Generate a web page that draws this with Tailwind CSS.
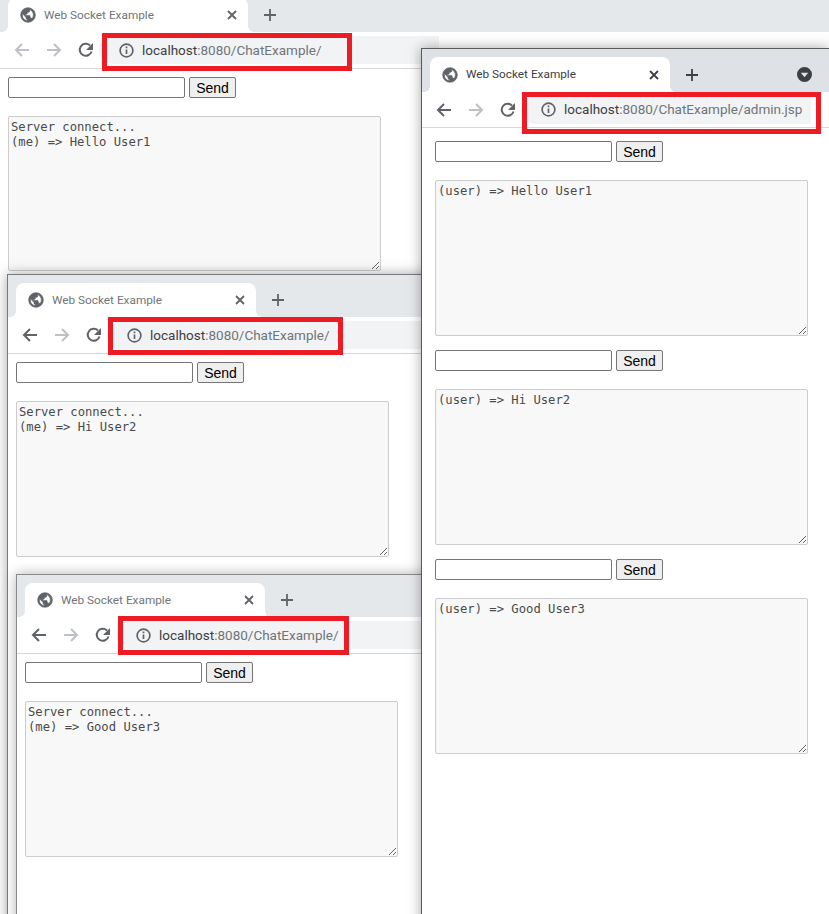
<!DOCTYPE html>
<html>
<head>
    <title>Web Socket Example</title>
    <script src="https://cdn.jsdelivr.net/npm/@tailwindcss/browser@4"></script>
</head>
<body class="bg-white overflow-hidden">
<div class="relative w-[829px] h-[914px] overflow-hidden font-['Liberation_Sans',sans-serif]">

    <!-- Window 1: user 1, top cut off -->
    <div class="absolute left-0 top-[-11px] w-[829px] h-[300px] bg-white">
        <div class="h-[43px] bg-[#e5e8eb] flex items-end pl-2">
            <div class="relative w-[240px] h-[34px] bg-white rounded-t-lg flex items-center pl-3 pr-[11px]">
                <i class="absolute -left-1.5 bottom-0 w-1.5 h-1.5 bg-[radial-gradient(circle_at_0_0,#e5e8eb_6px,white_6px)]"></i>
                <i class="absolute -right-1.5 bottom-0 w-1.5 h-1.5 bg-[radial-gradient(circle_at_100%_0,#e5e8eb_6px,white_6px)]"></i>
                <svg class="w-4 h-4 text-[#5f6368] shrink-0" viewBox="0 0 24 24" fill="currentColor" stroke="currentColor" stroke-width="1"><path d="M12 1a11 11 0 1 0 0 22 11 11 0 0 0 0-22zM3.500 12c0-.7.1-1.300.2-1.900L9 15.500v1.200c0 1 .8 1.800 1.800 1.800v2A8.500 8.500 0 0 1 3.500 12zm14.400 5.500c-.2-.7-.9-1.200-1.700-1.200h-1v-2.800c0-.5-.4-.9-.9-.9H8.200v-1.800H10c.5 0 .9-.4.900-.9V8h1.800c1 0 1.800-.8 1.800-1.800v-2.400a8.500 8.500 0 0 1 3.400 13.700z"/></svg>
                <span class="ml-2 mt-px text-[11.8px] text-[#70757a] font-['Roboto',sans-serif]">Web Socket Example</span>
                <svg class="w-2.5 h-2.5 ml-auto text-[#5f6368]" viewBox="0 0 10 10" stroke="currentColor" stroke-width="1.800"><path d="M1 1l8 8M9 1l-8 8"/></svg>
            </div>
            <svg class="w-3.5 h-3.5 ml-[15px] mb-2.5 text-[#5f6368]" viewBox="0 0 14 14" stroke="currentColor" stroke-width="1.800"><path d="M7 1v12M1 7h12"/></svg>
        </div>
        <div class="h-[36px] flex items-center">
            <svg class="w-4 h-4 ml-3.5 text-[#bdc1c6]" viewBox="0 0 16 16" fill="none" stroke="currentColor" stroke-width="2"><path d="M15 8H2M8 2L2 8l6 6"/></svg>
            <svg class="w-4 h-4 ml-4 text-[#bdc1c6]" viewBox="0 0 16 16" fill="none" stroke="currentColor" stroke-width="2"><path d="M1 8h13M8 2l6 6-6 6"/></svg>
            <svg class="w-4 h-4 ml-4 text-[#5f6368]" viewBox="0 0 16 16" fill="none" stroke="currentColor" stroke-width="2"><path d="M13.500 9.500A6 6 0 1 1 12 3.500"/><path d="M15 1v7H8z" fill="currentColor" stroke="none"/></svg>
            <div class="w-[340px] h-[28px] ml-[5px] bg-[#f1f3f4] rounded-l-full flex items-center pl-5">
                <svg class="w-[15px] h-[15px] text-[#5f6368]" viewBox="0 0 16 16" fill="none" stroke="currentColor" stroke-width="1.800"><circle cx="8" cy="8" r="6.800"/><path d="M8 7v4.800M8 3.600v1.900"/></svg>
                <span class="ml-2 text-[13.5px] text-[#70757a] font-['Roboto',sans-serif]"><span class="text-[#3c4043]">localhost</span>:8080/ChatExample/</span>
            </div>
        </div>
        <div class="border-t border-[#d6d6d6] pl-2 pt-2">
            <div class="flex items-center gap-1">
                <input class="w-[177px] h-[21px] border border-[#767676] rounded-[2px] bg-white">
                <button class="w-[47px] h-[21px] pb-[2px] border border-[#767676] rounded-[2px] bg-[#efefef] text-sm text-black">Send</button>
            </div>
            <textarea class="block w-[373px] h-[155px] mt-[18px] px-[2px] pt-[3px] pb-[2px] border border-[#cccccc] rounded-[2px] bg-[#f8f8f8] text-[12.2px] leading-[15px] text-[#4a4a4a] font-['DejaVu_Sans_Mono',monospace] outline-none">Server connect...
(me) =&gt; Hello User1</textarea>
        </div>
        <div class="absolute left-[102px] top-[44px] w-[250px] h-[38px] border-[5px] border-[#ed1c24]"></div>
    </div>

    <!-- Window 2: user 2 -->
    <div class="absolute left-[7px] top-[274px] w-[440px] h-[660px] bg-white border border-[#7a7a7a] shadow-[0_0_12px_rgba(0,0,0,0.35)]">
        <div class="h-[42px] bg-[#e5e8eb] flex items-end pl-2">
            <div class="relative w-[240px] h-[34px] bg-white rounded-t-lg flex items-center pl-3 pr-[11px]">
                <i class="absolute -left-1.5 bottom-0 w-1.5 h-1.5 bg-[radial-gradient(circle_at_0_0,#e5e8eb_6px,white_6px)]"></i>
                <i class="absolute -right-1.5 bottom-0 w-1.5 h-1.5 bg-[radial-gradient(circle_at_100%_0,#e5e8eb_6px,white_6px)]"></i>
                <svg class="w-4 h-4 text-[#5f6368] shrink-0" viewBox="0 0 24 24" fill="currentColor" stroke="currentColor" stroke-width="1"><path d="M12 1a11 11 0 1 0 0 22 11 11 0 0 0 0-22zM3.500 12c0-.7.1-1.300.2-1.900L9 15.500v1.200c0 1 .8 1.800 1.800 1.800v2A8.500 8.500 0 0 1 3.500 12zm14.400 5.500c-.2-.7-.9-1.200-1.700-1.200h-1v-2.800c0-.5-.4-.9-.9-.9H8.200v-1.800H10c.5 0 .9-.4.900-.9V8h1.800c1 0 1.800-.8 1.800-1.800v-2.400a8.500 8.500 0 0 1 3.400 13.700z"/></svg>
                <span class="ml-2 mt-px text-[11.8px] text-[#70757a] font-['Roboto',sans-serif]">Web Socket Example</span>
                <svg class="w-2.5 h-2.5 ml-auto text-[#5f6368]" viewBox="0 0 10 10" stroke="currentColor" stroke-width="1.800"><path d="M1 1l8 8M9 1l-8 8"/></svg>
            </div>
            <svg class="w-3.5 h-3.5 ml-[15px] mb-2.5 text-[#5f6368]" viewBox="0 0 14 14" stroke="currentColor" stroke-width="1.800"><path d="M7 1v12M1 7h12"/></svg>
        </div>
        <div class="h-[36px] flex items-center">
            <svg class="w-4 h-4 ml-3.5 text-[#5f6368]" viewBox="0 0 16 16" fill="none" stroke="currentColor" stroke-width="2"><path d="M15 8H2M8 2L2 8l6 6"/></svg>
            <svg class="w-4 h-4 ml-4 text-[#bdc1c6]" viewBox="0 0 16 16" fill="none" stroke="currentColor" stroke-width="2"><path d="M1 8h13M8 2l6 6-6 6"/></svg>
            <svg class="w-4 h-4 ml-4 text-[#5f6368]" viewBox="0 0 16 16" fill="none" stroke="currentColor" stroke-width="2"><path d="M13.500 9.500A6 6 0 1 1 12 3.500"/><path d="M15 1v7H8z" fill="currentColor" stroke="none"/></svg>
            <div class="w-[330px] h-[28px] ml-[5px] bg-[#f1f3f4] rounded-l-full flex items-center pl-5">
                <svg class="w-[15px] h-[15px] text-[#5f6368]" viewBox="0 0 16 16" fill="none" stroke="currentColor" stroke-width="1.800"><circle cx="8" cy="8" r="6.800"/><path d="M8 7v4.800M8 3.600v1.900"/></svg>
                <span class="ml-2 text-[13.5px] text-[#70757a] font-['Roboto',sans-serif]"><span class="text-[#3c4043]">localhost</span>:8080/ChatExample/</span>
            </div>
        </div>
        <div class="border-t border-[#d6d6d6] pl-2 pt-2">
            <div class="flex items-center gap-1">
                <input class="w-[177px] h-[21px] border border-[#767676] rounded-[2px] bg-white">
                <button class="w-[47px] h-[21px] pb-[2px] border border-[#767676] rounded-[2px] bg-[#efefef] text-sm text-black">Send</button>
            </div>
            <textarea class="block w-[373px] h-[156px] mt-[18px] px-[2px] pt-[3px] pb-[2px] border border-[#cccccc] rounded-[2px] bg-[#f8f8f8] text-[12.2px] leading-[15px] text-[#4a4a4a] font-['DejaVu_Sans_Mono',monospace] outline-none">Server connect...
(me) =&gt; Hi User2</textarea>
        </div>
        <div class="absolute left-[100px] top-[42px] w-[235px] h-[38px] border-[5px] border-[#ed1c24]"></div>
    </div>

    <!-- Window 3: user 3 -->
    <div class="absolute left-[16px] top-[574px] w-[440px] h-[360px] bg-white border border-[#8a8a8a] shadow-[0_0_12px_rgba(0,0,0,0.3)]">
        <div class="h-[42px] bg-[#e5e8eb] flex items-end pl-2">
            <div class="relative w-[240px] h-[34px] bg-white rounded-t-lg flex items-center pl-3 pr-[11px]">
                <i class="absolute -left-1.5 bottom-0 w-1.5 h-1.5 bg-[radial-gradient(circle_at_0_0,#e5e8eb_6px,white_6px)]"></i>
                <i class="absolute -right-1.5 bottom-0 w-1.5 h-1.5 bg-[radial-gradient(circle_at_100%_0,#e5e8eb_6px,white_6px)]"></i>
                <svg class="w-4 h-4 text-[#5f6368] shrink-0" viewBox="0 0 24 24" fill="currentColor" stroke="currentColor" stroke-width="1"><path d="M12 1a11 11 0 1 0 0 22 11 11 0 0 0 0-22zM3.500 12c0-.7.1-1.300.2-1.900L9 15.500v1.200c0 1 .8 1.800 1.800 1.800v2A8.500 8.500 0 0 1 3.500 12zm14.400 5.500c-.2-.7-.9-1.200-1.700-1.200h-1v-2.800c0-.5-.4-.9-.9-.9H8.200v-1.800H10c.5 0 .9-.4.900-.9V8h1.800c1 0 1.800-.8 1.800-1.800v-2.400a8.500 8.500 0 0 1 3.400 13.700z"/></svg>
                <span class="ml-2 mt-px text-[11.8px] text-[#70757a] font-['Roboto',sans-serif]">Web Socket Example</span>
                <svg class="w-2.5 h-2.5 ml-auto text-[#5f6368]" viewBox="0 0 10 10" stroke="currentColor" stroke-width="1.800"><path d="M1 1l8 8M9 1l-8 8"/></svg>
            </div>
            <svg class="w-3.5 h-3.5 ml-[15px] mb-2.5 text-[#5f6368]" viewBox="0 0 14 14" stroke="currentColor" stroke-width="1.800"><path d="M7 1v12M1 7h12"/></svg>
        </div>
        <div class="h-[36px] flex items-center">
            <svg class="w-4 h-4 ml-3.5 text-[#5f6368]" viewBox="0 0 16 16" fill="none" stroke="currentColor" stroke-width="2"><path d="M15 8H2M8 2L2 8l6 6"/></svg>
            <svg class="w-4 h-4 ml-4 text-[#bdc1c6]" viewBox="0 0 16 16" fill="none" stroke="currentColor" stroke-width="2"><path d="M1 8h13M8 2l6 6-6 6"/></svg>
            <svg class="w-4 h-4 ml-4 text-[#5f6368]" viewBox="0 0 16 16" fill="none" stroke="currentColor" stroke-width="2"><path d="M13.500 9.500A6 6 0 1 1 12 3.500"/><path d="M15 1v7H8z" fill="currentColor" stroke="none"/></svg>
            <div class="w-[320px] h-[28px] ml-[5px] bg-[#f1f3f4] rounded-l-full flex items-center pl-5">
                <svg class="w-[15px] h-[15px] text-[#5f6368]" viewBox="0 0 16 16" fill="none" stroke="currentColor" stroke-width="1.800"><circle cx="8" cy="8" r="6.800"/><path d="M8 7v4.800M8 3.600v1.900"/></svg>
                <span class="ml-2 text-[13.5px] text-[#70757a] font-['Roboto',sans-serif]"><span class="text-[#3c4043]">localhost</span>:8080/ChatExample/</span>
            </div>
        </div>
        <div class="border-t border-[#d6d6d6] pl-2 pt-2">
            <div class="flex items-center gap-1">
                <input class="w-[177px] h-[21px] border border-[#767676] rounded-[2px] bg-white">
                <button class="w-[47px] h-[21px] pb-[2px] border border-[#767676] rounded-[2px] bg-[#efefef] text-sm text-black">Send</button>
            </div>
            <textarea class="block w-[373px] h-[156px] mt-[18px] px-[2px] pt-[3px] pb-[2px] border border-[#cccccc] rounded-[2px] bg-[#f8f8f8] text-[12.2px] leading-[15px] text-[#4a4a4a] font-['DejaVu_Sans_Mono',monospace] outline-none">Server connect...
(me) =&gt; Good User3</textarea>
        </div>
        <div class="absolute left-[101px] top-[41px] w-[231px] h-[39px] border-[5px] border-[#ed1c24]"></div>
    </div>

    <!-- Window 4: admin -->
    <div class="absolute left-[421px] top-[48px] w-[408px] h-[880px] bg-white border border-[#5a5a5a] border-r-0 shadow-[0_0_12px_rgba(0,0,0,0.35)]">
        <div class="h-[43px] bg-[#dee1e6] flex items-end pl-2 relative">
            <div class="relative w-[240px] h-[35px] bg-white rounded-t-lg flex items-center pl-3 pr-[11px]">
                <i class="absolute -left-1.5 bottom-0 w-1.5 h-1.5 bg-[radial-gradient(circle_at_0_0,#dee1e6_6px,white_6px)]"></i>
                <i class="absolute -right-1.5 bottom-0 w-1.5 h-1.5 bg-[radial-gradient(circle_at_100%_0,#dee1e6_6px,white_6px)]"></i>
                <svg class="w-4 h-4 text-[#5f6368] shrink-0" viewBox="0 0 24 24" fill="currentColor" stroke="currentColor" stroke-width="1"><path d="M12 1a11 11 0 1 0 0 22 11 11 0 0 0 0-22zM3.500 12c0-.7.1-1.300.2-1.900L9 15.500v1.200c0 1 .8 1.800 1.800 1.800v2A8.500 8.500 0 0 1 3.500 12zm14.400 5.500c-.2-.7-.9-1.200-1.700-1.200h-1v-2.800c0-.5-.4-.9-.9-.9H8.200v-1.800H10c.5 0 .9-.4.900-.9V8h1.800c1 0 1.800-.8 1.800-1.800v-2.400a8.500 8.500 0 0 1 3.400 13.700z"/></svg>
                <span class="ml-2 mt-px text-[11.8px] text-[#3c4043] font-['Roboto',sans-serif]">Web Socket Example</span>
                <svg class="w-2.5 h-2.5 ml-auto text-[#3c4043]" viewBox="0 0 10 10" stroke="currentColor" stroke-width="1.800"><path d="M1 1l8 8M9 1l-8 8"/></svg>
            </div>
            <svg class="w-3.5 h-3.5 ml-[15px] mb-2.5 text-[#3c4043]" viewBox="0 0 14 14" stroke="currentColor" stroke-width="1.800"><path d="M7 1v12M1 7h12"/></svg>
            <svg class="absolute left-[375px] top-[18px] w-[15px] h-[15px] text-[#3c4043]" viewBox="0 0 16 16" fill="currentColor"><path d="M8 0a8 8 0 1 0 0 16A8 8 0 0 0 8 0zM4 6h8l-4 5z" fill-rule="evenodd"/></svg>
        </div>
        <div class="h-[35px] flex items-center">
            <svg class="w-4 h-4 ml-3.5 text-[#5f6368]" viewBox="0 0 16 16" fill="none" stroke="currentColor" stroke-width="2"><path d="M15 8H2M8 2L2 8l6 6"/></svg>
            <svg class="w-4 h-4 ml-4 text-[#bdc1c6]" viewBox="0 0 16 16" fill="none" stroke="currentColor" stroke-width="2"><path d="M1 8h13M8 2l6 6-6 6"/></svg>
            <svg class="w-4 h-4 ml-4 text-[#5f6368]" viewBox="0 0 16 16" fill="none" stroke="currentColor" stroke-width="2"><path d="M13.500 9.500A6 6 0 1 1 12 3.500"/><path d="M15 1v7H8z" fill="currentColor" stroke="none"/></svg>
            <div class="w-[290px] h-[28px] ml-[5px] bg-[#f1f3f4] rounded-l-full flex items-center pl-5">
                <svg class="w-[15px] h-[15px] text-[#5f6368]" viewBox="0 0 16 16" fill="none" stroke="currentColor" stroke-width="1.800"><circle cx="8" cy="8" r="6.800"/><path d="M8 7v4.800M8 3.600v1.900"/></svg>
                <span class="ml-2 text-[13.5px] text-[#70757a] font-['Roboto',sans-serif]"><span class="text-[#3c4043]">localhost</span>:8080/ChatExample/admin.jsp</span>
            </div>
        </div>
        <div class="border-t border-[#d6d6d6] pl-[13px] pt-[13px] flex flex-col">
            <div class="flex items-center gap-1">
                <input class="w-[177px] h-[21px] border border-[#767676] rounded-[2px] bg-white">
                <button class="w-[47px] h-[21px] pb-[2px] border border-[#767676] rounded-[2px] bg-[#efefef] text-sm text-black">Send</button>
            </div>
            <textarea class="block w-[373px] h-[156px] mt-[18px] px-[2px] pt-[3px] pb-[2px] border border-[#cccccc] rounded-[2px] bg-[#f8f8f8] text-[12.2px] leading-[15px] text-[#4a4a4a] font-['DejaVu_Sans_Mono',monospace] outline-none">(user) =&gt; Hello User1</textarea>
            <div class="flex items-center gap-1 mt-[14px]">
                <input class="w-[177px] h-[21px] border border-[#767676] rounded-[2px] bg-white">
                <button class="w-[47px] h-[21px] pb-[2px] border border-[#767676] rounded-[2px] bg-[#efefef] text-sm text-black">Send</button>
            </div>
            <textarea class="block w-[373px] h-[156px] mt-[18px] px-[2px] pt-[3px] pb-[2px] border border-[#cccccc] rounded-[2px] bg-[#f8f8f8] text-[12.2px] leading-[15px] text-[#4a4a4a] font-['DejaVu_Sans_Mono',monospace] outline-none">(user) =&gt; Hi User2</textarea>
            <div class="flex items-center gap-1 mt-[14px]">
                <input class="w-[177px] h-[21px] border border-[#767676] rounded-[2px] bg-white">
                <button class="w-[47px] h-[21px] pb-[2px] border border-[#767676] rounded-[2px] bg-[#efefef] text-sm text-black">Send</button>
            </div>
            <textarea class="block w-[373px] h-[156px] mt-[18px] px-[2px] pt-[3px] pb-[2px] border border-[#cccccc] rounded-[2px] bg-[#f8f8f8] text-[12.2px] leading-[15px] text-[#4a4a4a] font-['DejaVu_Sans_Mono',monospace] outline-none">(user) =&gt; Good User3</textarea>
        </div>
        <div class="absolute left-[100px] top-[43px] w-[299px] h-[42px] border-[5px] border-[#ed1c24]"></div>
    </div>

</div>
</body>
</html>
